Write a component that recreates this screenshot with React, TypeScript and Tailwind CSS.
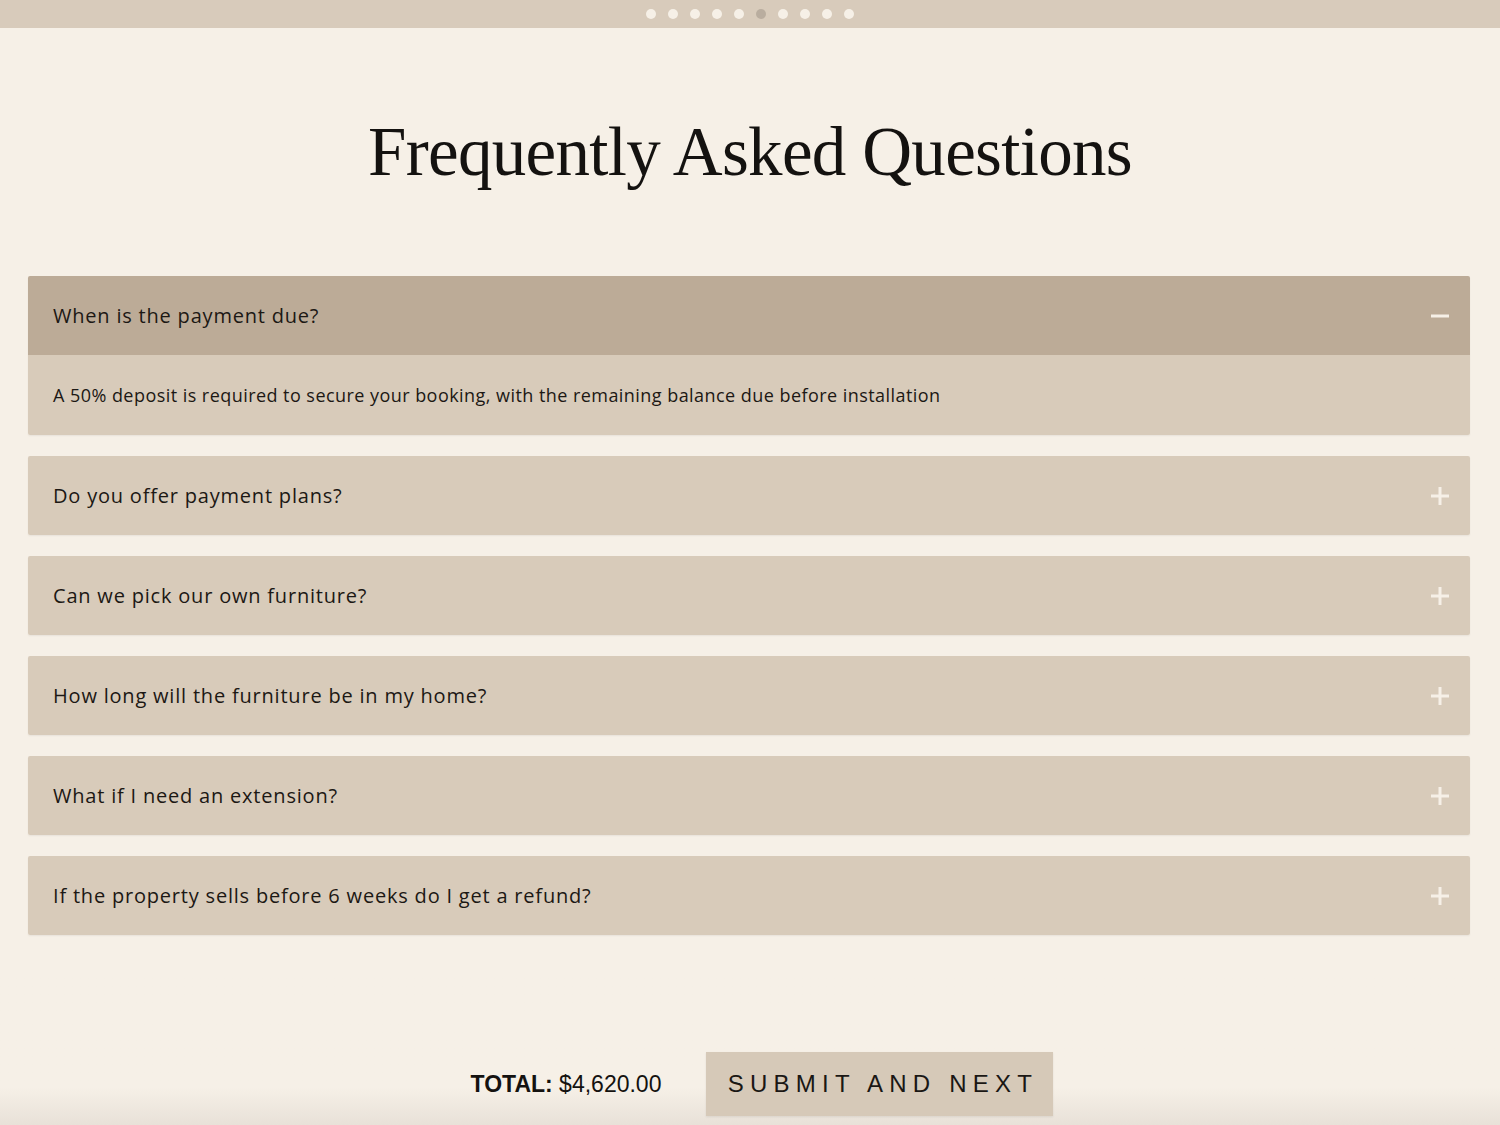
import { useState } from 'react';

interface FaqItem {
  id: number;
  question: string;
  answer: string;
}

const faqs: FaqItem[] = [
  {
    id: 1,
    question: 'When is the payment due?',
    answer: 'A 50% deposit is required to secure your booking, with the remaining balance due before installation',
  },
  { id: 2, question: 'Do you offer payment plans?', answer: '' },
  { id: 3, question: 'Can we pick our own furniture?', answer: '' },
  { id: 4, question: 'How long will the furniture be in my home?', answer: '' },
  { id: 5, question: 'What if I need an extension?', answer: '' },
  { id: 6, question: 'If the property sells before 6 weeks do I get a refund?', answer: '' },
];

function ToggleIcon({ open }: { open: boolean }) {
  return (
    <svg width="20" height="20" viewBox="0 0 20 20" className="shrink-0">
      <rect x="1" y="8.5" width="18" height="3" fill="#f6f0e7" />
      {!open && <rect x="8.5" y="1" width="3" height="18" fill="#f6f0e7" />}
    </svg>
  );
}

export default function App() {
  const [openId, setOpenId] = useState<number | null>(1);

  return (
    <div className="h-[1125px] w-full bg-[#f6f0e7] flex flex-col overflow-hidden">
      {/* progress dots */}
      <div className="h-[28px] shrink-0 bg-[#d8cbbb] flex items-center justify-center gap-[12px]">
        {[...Array(10)].map((_, i) => (
          <div
            key={i}
            className={`w-[10px] h-[10px] rounded-full ${i === 5 ? 'bg-[#b9ad9f]' : 'bg-[#f6f0e7]'}`}
          />
        ))}
      </div>

      <h1 className="mt-[90px] text-center text-[69px] leading-none tracking-[-0.01em] text-[#141210] font-['Liberation_Serif',serif] font-normal">
        Frequently Asked Questions
      </h1>

      <div className="mt-[89px] pl-[28px] pr-[30px] flex flex-col gap-[21px]">
        {faqs.map((faq) => {
          const open = openId === faq.id;
          return (
            <div key={faq.id} className="rounded-[2px] overflow-hidden shadow-[0_1px_2px_rgba(0,0,0,0.06)]">
              <button
                onClick={() => setOpenId(open ? null : faq.id)}
                className={`w-full h-[79px] flex items-center justify-between pl-[25px] pr-[20px] text-left ${open ? 'bg-[#bcab97]' : 'bg-[#d8cbba]'}`}
              >
                <span className="text-[20px] tracking-[0.04em] text-[#1c1814] font-['Open_Sans',sans-serif]">
                  {faq.question}
                </span>
                <ToggleIcon open={open} />
              </button>
              {open && (
                <div className="h-[80px] flex items-center px-[25px] bg-[#d8cbba]">
                  <p className="text-[18px] tracking-[0.025em] text-[#1c1814] font-['Open_Sans',sans-serif]">{faq.answer}</p>
                </div>
              )}
            </div>
          );
        })}
      </div>

      <div className="mt-auto h-[150px] shrink-0 flex items-end justify-center bg-gradient-to-b from-[#f6f0e7] from-75% to-[#e8e1d8] pb-[9px]">
        <div className="ml-[24px] flex items-center gap-[45px]">
          <div className="text-[23px] text-[#141210] font-['Liberation_Sans_Narrow','Liberation_Sans',sans-serif]">
            <span className="font-bold">TOTAL:</span> $4,620.00
          </div>
          <button className="w-[347px] h-[64px] bg-[#d6c9b8] text-[24px] tracking-[0.26em] text-[#1a1714] font-['Liberation_Sans',sans-serif] pl-[6px] shadow-[0_1px_2px_rgba(0,0,0,0.08)]">
            SUBMIT AND NEXT
          </button>
        </div>
      </div>
    </div>
  );
}
